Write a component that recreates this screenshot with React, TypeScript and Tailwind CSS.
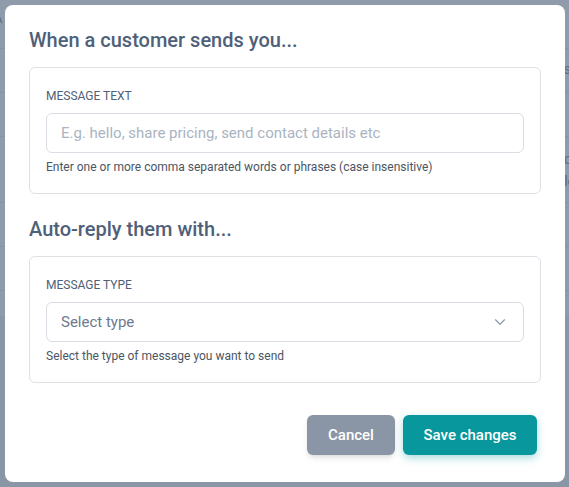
import React from 'react';
import { ChevronDown } from 'lucide-react';

const font = { fontFamily: 'Roboto, "Noto Sans", sans-serif' };

const BackgroundPage: React.FC = () => {
  // faded page behind the overlay
  return (
    <div className="flex flex-col h-full">
      <div className="bg-[#8f9bab]">
        <div className="h-[49px] border-b border-[#8593a3] flex items-center px-0">
          <span className="text-[13px] text-[#5f6b7c] -ml-[6px] -mt-[10px]">A</span>
        </div>
        <div className="h-[44px] border-b border-[#8593a3] flex items-center justify-end">
          <span className="text-[14px] text-[#5f6b7c] -mr-[2px] -mt-[2px]">s</span>
        </div>
        <div className="h-[44px] border-b border-[#8593a3]" />
        <div className="h-[66px] border-b border-[#8593a3] flex flex-col items-end justify-center leading-[22px]">
          <span className="text-[14px] text-[#5f6b7c] -mr-[3px]">o</span>
          <span className="text-[14px] text-[#5f6b7c] -mr-[6px]">le</span>
        </div>
        <div className="h-[44px] border-b border-[#8593a3] flex items-center justify-end">
          <span className="text-[14px] text-[#5f6b7c] -mr-[3px]">i</span>
        </div>
        <div className="h-[44px] border-b border-[#8593a3]" />
        <div className="h-[25px]" />
      </div>
      <div className="flex-1 bg-[#8a96a6]" />
    </div>
  );
};

export default function App() {
  return (
    <div className="relative w-full h-[487px] overflow-hidden" style={font}>
      <BackgroundPage />

      {/* Modal */}
      <div className="absolute left-[5px] top-[5px] w-[560px] h-[477px] bg-white rounded-lg px-6 pt-[21px]">
        <h2 className="text-[20px] leading-7 font-medium text-[#4f6079] mb-[13px]">
          When a customer sends you...
        </h2>
        <div className="border border-[#dde1e6] rounded-md px-4 pt-[20px] pb-[18px]">
          <label className="block text-[12px] leading-4 font-normal uppercase text-[#4f6079] mb-[9px]">
            Message text
          </label>
          <input
            className="w-full h-10 border border-[#d9dee4] rounded-md px-[14px] text-[15px] text-[#334155] placeholder:text-[#aab4c1] outline-none"
            placeholder="E.g. hello, share pricing, send contact details etc"
          />
          <p className="mt-[6px] text-[12px] leading-4 text-[#4b5563]">
            Enter one or more comma separated words or phrases (case insensitive)
          </p>
        </div>

        <h2 className="mt-[21px] text-[20px] leading-7 font-medium text-[#4f6079] mb-[13px]">
          Auto-reply them with...
        </h2>
        <div className="border border-[#dde1e6] rounded-md px-4 pt-[20px] pb-[18px]">
          <label className="block text-[12px] leading-4 font-normal uppercase text-[#4f6079] mb-[9px]">
            Message type
          </label>
          <button className="w-full h-10 border border-[#d9dee4] rounded-md pl-[14px] pr-[14px] flex items-center justify-between text-[15px] text-[#6b7a8f]">
            <span>Select type</span>
            <ChevronDown size={18} strokeWidth={1.5} className="text-[#8a96a6]" />
          </button>
          <p className="mt-[6px] text-[12px] leading-4 text-[#4b5563]">
            Select the type of message you want to send
          </p>
        </div>

        <div className="mt-[32px] flex justify-end gap-2 pr-1">
          <button className="h-10 w-[88px] rounded-md bg-[#8a95a6] text-white text-[15px] font-medium shadow-md">
            Cancel
          </button>
          <button className="h-10 w-[134px] rounded-md bg-[#07979c] text-white text-[15px] font-medium shadow-[0_3px_8px_rgba(7,151,156,0.35)]">
            Save changes
          </button>
        </div>
      </div>
    </div>
  );
}
